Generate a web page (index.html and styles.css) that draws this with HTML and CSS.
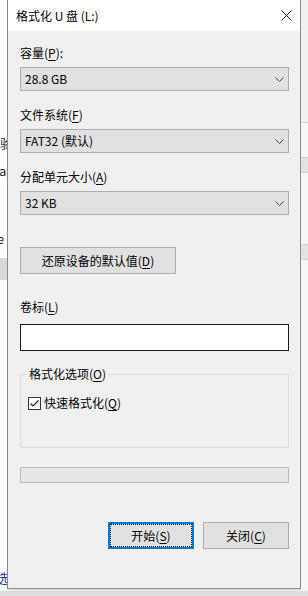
FILE: index.html
```html
<!DOCTYPE html>
<html lang="zh-CN">
<head>
  <meta charset="UTF-8">
  <meta name="viewport" content="width=device-width, initial-scale=1.0">
  <title>格式化 U 盘 (L:)</title>
  <link rel="stylesheet" href="styles.css">
</head>
<body>
  <div class="desk">
    <div class="behind-left">
      <span class="frag frag-a">试验</span>
      <span class="frag frag-b">ag</span>
      <span class="frag frag-c">e</span>
      <div class="frag-box"></div>
      <span class="frag frag-d">选中</span>
    </div>

    <div class="dialog">
      <div class="titlebar">
        <span class="title">格式化 U 盘 (L:)</span>
        <svg class="close" width="11" height="11" viewBox="0 0 11 11">
          <path d="M0.5 0.5 L10.5 10.5 M10.5 0.5 L0.5 10.5" stroke="#111" stroke-width="1" fill="none"/>
        </svg>
      </div>

      <div class="content">
        <div class="label first">容量(<u>P</u>):</div>
        <div class="select">
          <span>28.8 GB</span>
          <svg class="chevron" width="9" height="5" viewBox="0 0 9 5"><path d="M0.5 0.5 L4.5 4.5 L8.5 0.5" stroke="#444" fill="none"/></svg>
        </div>

        <div class="label">文件系统(<u>F</u>)</div>
        <div class="select">
          <span>FAT32 (默认)</span>
          <svg class="chevron" width="9" height="5" viewBox="0 0 9 5"><path d="M0.5 0.5 L4.5 4.5 L8.5 0.5" stroke="#444" fill="none"/></svg>
        </div>

        <div class="label">分配单元大小(<u>A</u>)</div>
        <div class="select">
          <span>32 KB</span>
          <svg class="chevron" width="9" height="5" viewBox="0 0 9 5"><path d="M0.5 0.5 L4.5 4.5 L8.5 0.5" stroke="#444" fill="none"/></svg>
        </div>

        <button class="btn restore">还原设备的默认值(<u>D</u>)</button>

        <div class="label volume">卷标(<u>L</u>)</div>
        <input class="textbox" type="text" value="">

        <fieldset class="group">
          <legend>格式化选项(<u>O</u>)</legend>
          <div class="check-row">
            <svg class="checkbox" width="13" height="13" viewBox="0 0 13 13">
              <rect x="0.5" y="0.5" width="12" height="12" fill="#fff" stroke="#333"/>
              <path d="M2.5 6.5 L5 9 L10.5 3.5" stroke="#222" stroke-width="1.2" fill="none"/>
            </svg>
            <span>快速格式化(<u>Q</u>)</span>
          </div>
        </fieldset>

        <div class="progress"></div>

        <div class="actions">
          <button class="btn primary">开始(<u>S</u>)</button>
          <button class="btn">关闭(<u>C</u>)</button>
        </div>
      </div>
    </div>

    <div class="behind-right">
      <div class="r-top"></div>
      <div class="r-bar first-bar"></div>
      <div class="r-bar"></div>
    </div>
  </div>
  <div class="taskstrip"></div>
</body>
</html>
```

FILE: styles.css
```css
:root {
  --face: #f0f0f0;
  --button: #e1e1e1;
  --button-border: #adadad;
  --accent: #0078d7;
  --frame: #8a8a8a;
}

body {
  margin: 0;
  width: 308px;
  height: 596px;
  overflow: hidden;
  background: #fff;
  color: #000;
  font-family: "Noto Sans CJK SC", "Noto Sans", sans-serif;
  font-size: 12px;
  line-height: 16px;
}

u {
  text-underline-offset: 2px;
}

.desk {
  display: flex;
  height: 589px;
}

/* window behind the dialog */
.behind-left {
  width: 7px;
  overflow: hidden;
  display: flex;
  flex-direction: column;
  background: #fff;
  white-space: nowrap;
}

.frag {
  display: block;
  font-size: 13px;
  line-height: 14px;
  color: #222;
}

.frag-a {
  margin: 136px 0 0 -13px;
}

.frag-b {
  margin: 14px 0 0 -1px;
}

.frag-c {
  margin: 54px 0 0 -3px;
}

.frag-box {
  height: 22px;
  margin-top: 12px;
  background: #d9d9d9;
}

.frag-d {
  margin: auto 0 4px -4px;
  color: #1f3d8f;
}

.behind-right {
  flex: 1;
  background: #f7f7f7;
}

.r-top {
  height: 122px;
  background: #f0f0f0;
  border-bottom: 1px solid #d6d6d6;
}

.r-bar {
  height: 14px;
  margin-top: 71px;
  background: #e3e3e3;
  border-top: 1px solid #cfcfcf;
  border-bottom: 1px solid #cfcfcf;
}

.r-bar.first-bar {
  margin-top: 34px;
}

.taskstrip {
  height: 7px;
  background: linear-gradient(#f4f4f4 0 2px, #dedede 2px);
}

/* dialog */
.dialog {
  width: 294px;
  box-sizing: border-box;
  border: 1px solid var(--frame);
  border-top: none;
  background: var(--face);
  display: flex;
  flex-direction: column;
  box-shadow: 1px 1px 2px rgba(0, 0, 0, 0.12);
}

.titlebar {
  height: 31px;
  background: #fff;
  display: flex;
  align-items: center;
  justify-content: space-between;
  padding: 0 8px 0 8px;
}

.content {
  display: flex;
  flex-direction: column;
  padding: 14px 11px 0 12px;
}

.label {
  height: 16px;
  margin-top: 16px;
}

.label.first {
  margin-top: 0;
}

.select {
  margin-top: 6px;
  height: 24px;
  box-sizing: border-box;
  border: 1px solid var(--button-border);
  background: var(--button);
  display: flex;
  align-items: center;
  justify-content: space-between;
  padding: 0 4px 0 4px;
}

.btn {
  height: 27px;
  width: 86px;
  box-sizing: border-box;
  border: 1px solid var(--button-border);
  background: var(--button);
  font: inherit;
  color: #000;
  padding: 0;
}

.btn.restore {
  width: 156px;
  margin-top: 32px;
}

.btn.primary {
  border: 2px solid var(--accent);
  outline: 1px dotted #000;
  outline-offset: -3px;
}

.label.volume {
  margin-top: 25px;
}

.textbox {
  margin: 9px 0 0;
  height: 27px;
  box-sizing: border-box;
  border: 1px solid #1a1a1a;
  background: #fff;
  padding: 0 4px;
  font: inherit;
}

.group {
  margin: 15px 0 0;
  padding: 13px 6px 36px;
  border: 1px solid #dcdcdc;
  min-width: 0;
}

.group legend {
  padding: 0 2px;
}

.check-row {
  display: flex;
  align-items: center;
  gap: 3px;
  height: 16px;
  padding-left: 1px;
}

.progress {
  margin-top: 19px;
  height: 16px;
  box-sizing: border-box;
  border: 1px solid #bcbcbc;
  background: #e6e6e6;
}

.actions {
  margin-top: 39px;
  display: flex;
  justify-content: flex-end;
  gap: 9px;
}
```
